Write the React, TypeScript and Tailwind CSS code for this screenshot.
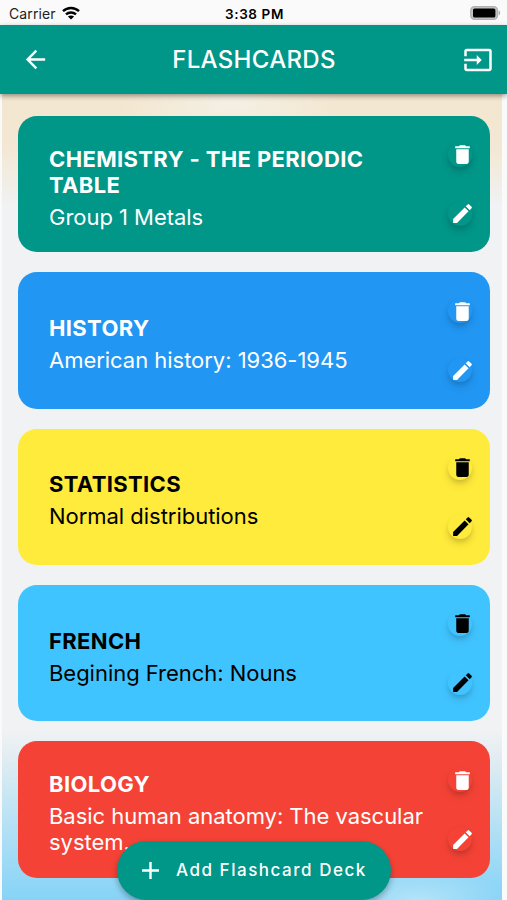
import React from 'react';
import { MdAdd, MdArrowBack, MdDelete, MdEdit, MdInput } from 'react-icons/md';

type Deck = {
  title: string;
  subtitle: string;
  color: string;
  text: string;
};

const DECKS: Deck[] = [
  { title: 'CHEMISTRY - THE PERIODIC TABLE', subtitle: 'Group 1 Metals', color: 'bg-[#009688]', text: 'text-white' },
  { title: 'HISTORY', subtitle: 'American history: 1936-1945', color: 'bg-[#2196f3]', text: 'text-white' },
  { title: 'STATISTICS', subtitle: 'Normal distributions', color: 'bg-[#ffeb3b]', text: 'text-black' },
  { title: 'FRENCH', subtitle: 'Begining French: Nouns', color: 'bg-[#40c4ff]', text: 'text-black' },
  { title: 'BIOLOGY', subtitle: 'Basic human anatomy: The vascular system.', color: 'bg-[#f44336]', text: 'text-white' },
];

function StatusBar() {
  return (
    <div className="grid h-[25px] shrink-0 grid-cols-3 items-center bg-[#fafafa] pt-[3px] pr-[6px] pl-[9px] text-black">
      <div className="flex items-center gap-[6px]">
        <span className="text-[14px] leading-none tracking-[0.1px] text-[#222]">Carrier</span>
        <svg width="18" height="14" viewBox="0 0 18 14" className="-mt-[2px]" fill="none" stroke="black" strokeWidth="2.4">
          <path d="M1 5.2C5.5 0.9 12.5 0.9 17 5.2" />
          <path d="M4 8.4C6.8 5.8 11.2 5.8 14 8.4" />
          <path d="M9 13.6L5.9 10.5C7.6 9 10.4 9 12.1 10.5Z" fill="black" stroke="none" />
        </svg>
      </div>
      <span className="pt-[1px] pr-[1px] text-center text-[13.5px] leading-none font-semibold tracking-[0.6px] whitespace-nowrap">3:38 PM</span>
      <svg width="31" height="14" viewBox="0 0 31 14" className="-mt-[3px] justify-self-end">
        <rect x="0.8" y="0.7" width="26.6" height="12.6" rx="3.6" fill="#c4c4c4" stroke="#b0b0b0" strokeWidth="1.3" />
        <rect x="3" y="2.4" width="22.4" height="9.2" rx="1.6" fill="black" />
        <path d="M28.6 4.6C30.6 5.2 30.6 8.8 28.6 9.4Z" fill="#aaa" />
      </svg>
    </div>
  );
}

function RoundAction({ children }: { children: React.ReactNode }) {
  return (
    <button className="flex h-[24px] w-[24px] items-center justify-center rounded-full pl-[5px] shadow-[0_3px_5px_-1px_rgba(0,0,0,0.14),0_5px_9px_rgba(0,0,0,0.1)]">
      {children}
    </button>
  );
}

function DeckCard({ deck }: { deck: Deck }) {
  return (
    <div className={`flex h-[136.5px] shrink-0 rounded-[19px] pr-[18px] pl-[31px] ${deck.color} ${deck.text}`}>
      <div className="flex flex-1 flex-col justify-center gap-[6px] pt-[7px]">
        <h2 className="max-w-[360px] text-[22px] leading-[26px] font-bold tracking-[0.36px]">{deck.title}</h2>
        <p className="max-w-[385px] text-[22px] leading-[26px] tracking-[-0.03px]">{deck.subtitle}</p>
      </div>
      <div className="flex flex-col gap-[35px] pt-[27px]">
        <RoundAction>
          <MdDelete size={25} className="shrink-0" />
        </RoundAction>
        <RoundAction>
          <MdEdit size={25} className="shrink-0" />
        </RoundAction>
      </div>
    </div>
  );
}

export default function App() {
  return (
    <div className="relative flex h-[900px] w-[507px] flex-col overflow-hidden bg-[#fafafa] font-[Inter,sans-serif]">
      <StatusBar />

      <header className="z-10 flex h-[69px] shrink-0 items-center justify-between bg-[#009688] pr-[14px] pl-[21px] text-white shadow-[0_2px_5px_rgba(0,0,0,0.4)]">
        <MdArrowBack size={29} />
        <h1 className="mr-[5px] text-[24px] leading-none font-medium tracking-[0.3px]">FLASHCARDS</h1>
        <MdInput size={30} />
      </header>

      <main className="mr-[5px] ml-[2px] flex flex-1 flex-col gap-[19.9px] overflow-hidden bg-[radial-gradient(ellipse_110px_40px_at_46%_10px,#f4f0e4,transparent),radial-gradient(ellipse_90px_30px_at_83%_100%,#b5e4f8,transparent),linear-gradient(180deg,#f4e6cf_0%,#f3e8d5_7%,#f0f2f4_14%,#f0f2f4_79%,#e3edf1_82%,#b9e2f4_90%,#86d3f7_100%)] pt-[21.8px] pr-[12px] pl-[16px]">
        {DECKS.map((deck) => (
          <DeckCard key={deck.title} deck={deck} />
        ))}
      </main>

      <button className="absolute top-[841px] left-[117px] z-20 flex h-[59px] w-[274px] items-center rounded-full bg-[#009688] pl-[19px] text-white shadow-[0_3px_6px_rgba(0,0,0,0.3)]">
        <MdAdd size={29} />
        <span className="ml-[11px] text-[17px] leading-none font-medium tracking-[1.53px] whitespace-nowrap">Add Flashcard Deck</span>
      </button>
    </div>
  );
}
